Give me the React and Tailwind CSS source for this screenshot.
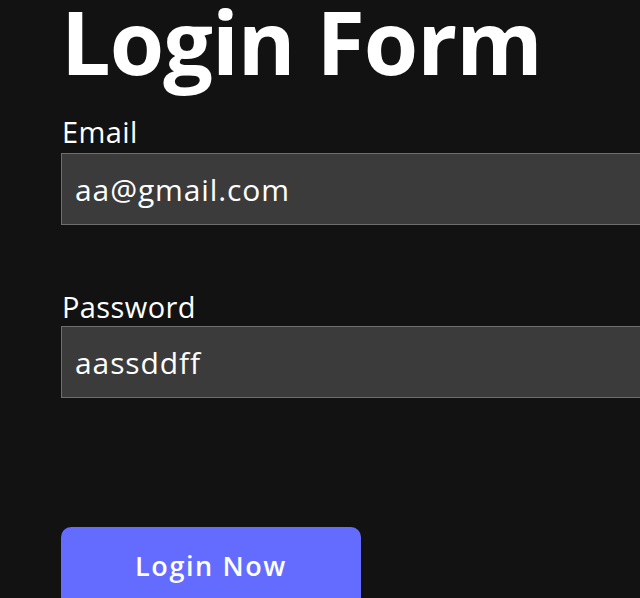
export default function App() {
  return (
    <div className="w-[640px] h-[598px] overflow-hidden bg-[#121212] text-white" style={{ fontFamily: '"Open Sans", "Noto Sans", sans-serif' }}>
      <div className="pl-[61px]">
        <h1 className="text-[88px] font-bold leading-none -mt-[3px] tracking-[-1px]">Login Form</h1>
        <div className="mt-[29px]">
          <label className="block text-[29px] leading-[36px] pl-[1px] tracking-[0.4px]">Email</label>
          <div className="mt-[3px] w-[700px] h-[72px] bg-[#3b3b3b] border border-[#6e6e6e] flex items-center pl-[13px] text-[30px] tracking-[0.9px]">aa@gmail.com</div>
        </div>
        <div className="mt-[64px]">
          <label className="block text-[29px] leading-[36px] pl-[1px] tracking-[0.4px]">Password</label>
          <div className="mt-[1px] w-[700px] h-[72px] bg-[#3b3b3b] border border-[#6e6e6e] flex items-center pl-[13px] text-[30px] tracking-[0.9px]">aassddff</div>
        </div>
        <button className="mt-[129px] w-[300px] h-[80px] rounded-[10px] bg-[#646cff] text-[27px] font-semibold tracking-[1.6px] flex items-start justify-center pt-[19px]">Login Now</button>
      </div>
    </div>
  );
}
